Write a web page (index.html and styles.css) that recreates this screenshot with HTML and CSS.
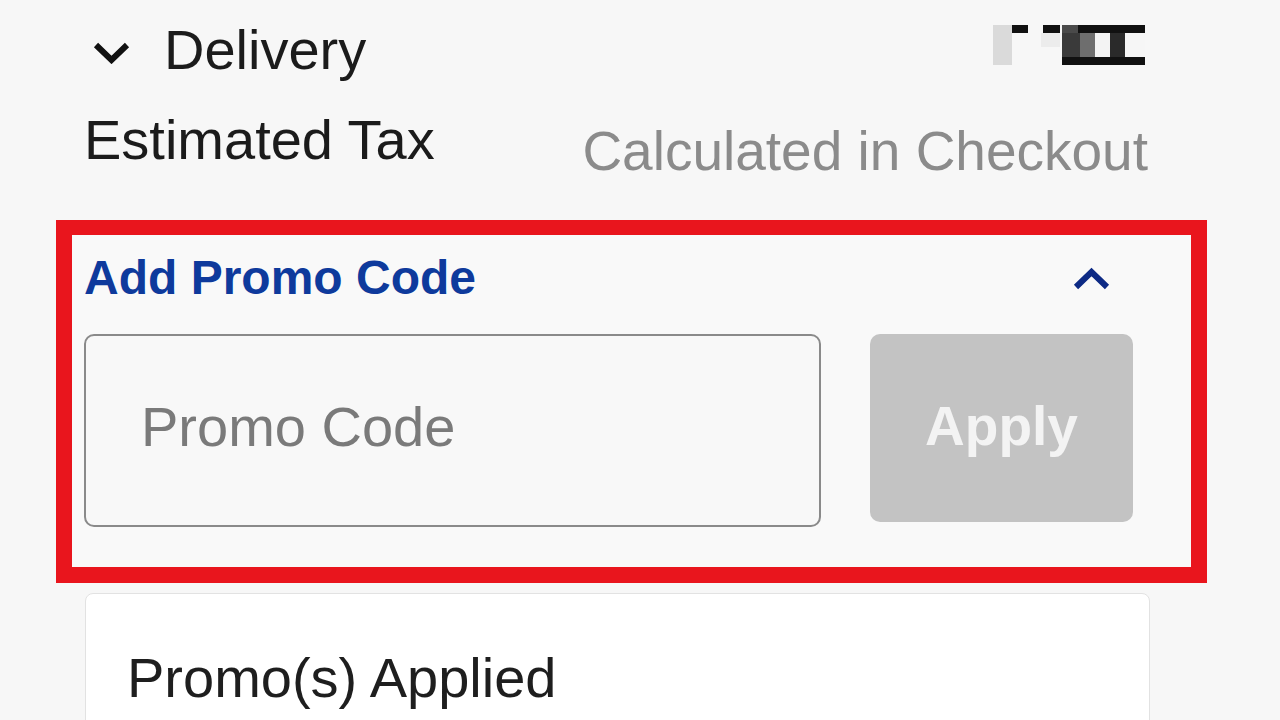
FILE: index.html
```html
<!DOCTYPE html>
<html lang="en">
<head>
<meta charset="utf-8">
<title>Order Summary</title>
<link rel="stylesheet" href="styles.css">
</head>
<body>
<main class="page">
  <div class="row delivery-row">
    <div class="delivery-label">
      <svg class="chev-down" viewBox="0 0 37 22" width="37" height="22" aria-hidden="true">
        <path d="M3 3 L18.5 18 L34 3" fill="none" stroke="#111" stroke-width="6" stroke-linejoin="miter"/>
      </svg>
      <span class="label">Delivery</span>
    </div>
    <svg class="price-blur" viewBox="0 0 152 40" width="152" height="40" aria-hidden="true">
      <rect x="0" y="0" width="19" height="40" fill="#dadada"/>
      <rect x="19" y="0" width="16" height="8" fill="#111"/>
      <rect x="50" y="0" width="17" height="8" fill="#111"/>
      <rect x="48" y="8" width="19" height="14" fill="#ececec"/>
      <rect x="69" y="0" width="16" height="8" fill="#4a4a4a"/>
      <rect x="85" y="0" width="67" height="8" fill="#111"/>
      <rect x="69" y="8" width="18" height="24" fill="#3a3a3a"/>
      <rect x="87" y="8" width="15" height="24" fill="#6e6e6e"/>
      <rect x="102" y="8" width="15" height="24" fill="#f3f3f3"/>
      <rect x="117" y="8" width="15" height="24" fill="#2a2a2a"/>
      <rect x="132" y="8" width="20" height="24" fill="#f6f6f6"/>
      <rect x="69" y="32" width="83" height="8" fill="#111"/>
    </svg>
  </div>

  <div class="row tax-row">
    <span class="label">Estimated Tax</span>
    <span class="muted">Calculated in Checkout</span>
  </div>

  <section class="promo-box">
    <div class="promo-head">
      <span class="promo-title">Add Promo Code</span>
      <svg class="chev-up" viewBox="0 0 37 23" width="37" height="23" aria-hidden="true">
        <path d="M3 20 L18.5 5 L34 20" fill="none" stroke="#0d2a85" stroke-width="6"/>
      </svg>
    </div>
    <div class="promo-form">
      <input class="promo-input" type="text" placeholder="Promo Code">
      <button class="apply-btn" type="button" disabled>Apply</button>
    </div>
  </section>

  <section class="applied-card">
    <span class="applied-title">Promo(s) Applied</span>
  </section>
</main>
</body>
</html>
```

FILE: styles.css
```css
html, body {
  margin: 0;
  padding: 0;
  background: #f7f7f7;
  overflow: hidden;
}

body {
  font-family: "Liberation Sans", Arial, sans-serif;
  color: #1b1b1b;
}

.page {
  padding: 18px 0 0 56px;
  width: 1280px;
  height: 720px;
  box-sizing: border-box;
}

.row {
  display: flex;
  justify-content: space-between;
  margin-left: 28px;
  width: 1064px;
}

.label {
  font-size: 56px;
  line-height: 64px;
  color: #1b1b1b;
}

.delivery-row {
  height: 64px;
  align-items: flex-start;
}

.delivery-label {
  display: flex;
  align-items: center;
  gap: 34px;
  padding-left: 9px;
}

.chev-down {
  display: block;
  margin-top: 6px;
}

.price-blur {
  display: block;
  margin-top: 7px;
  margin-right: 3px;
}

.tax-row {
  margin-top: 26px;
  align-items: flex-start;
}

.muted {
  font-size: 55px;
  line-height: 64px;
  color: #8b8b8b;
  margin-top: 11px;
}

.promo-box {
  margin-top: 37px;
  width: 1151px;
  height: 363px;
  box-sizing: border-box;
  border: 16px solid #e9151d;
  border-top-width: 15px;
  background: #f9f9f9;
  padding: 15px 58px 39px 12px;
}

.promo-head {
  display: flex;
  justify-content: space-between;
  align-items: center;
  height: 56px;
  padding-right: 23px;
}

.promo-title {
  font-size: 48px;
  line-height: 56px;
  font-weight: 700;
  color: #0e3a9c;
}

.chev-up {
  display: block;
}

.promo-form {
  display: flex;
  align-items: flex-start;
  gap: 49px;
  margin-top: 28px;
}

.promo-input {
  width: 737px;
  height: 193px;
  box-sizing: border-box;
  border: 2px solid #8a8a8a;
  border-radius: 10px;
  background: #f8f8f8;
  padding: 0 20px 8px 55px;
  margin: 0;
  font-family: "Liberation Sans", Arial, sans-serif;
  font-size: 56px;
  color: #333;
  outline: none;
}

.promo-input::placeholder {
  color: #7a7a7a;
  opacity: 1;
}

.apply-btn {
  width: 263px;
  height: 188px;
  border: none;
  border-radius: 10px;
  background: #c3c3c3;
  color: #f3f3f3;
  font-family: "Liberation Sans", Arial, sans-serif;
  font-size: 55px;
  font-weight: 700;
  padding: 0 0 4px 0;
  margin: 0;
}

.applied-card {
  margin-top: 10px;
  margin-left: 29px;
  width: 1065px;
  height: 200px;
  box-sizing: border-box;
  background: #ffffff;
  border: 1px solid #e2e2e2;
  border-radius: 8px;
  padding: 52px 0 0 41px;
}

.applied-title {
  font-size: 56px;
  line-height: 63px;
  color: #1e1e1e;
}
```
